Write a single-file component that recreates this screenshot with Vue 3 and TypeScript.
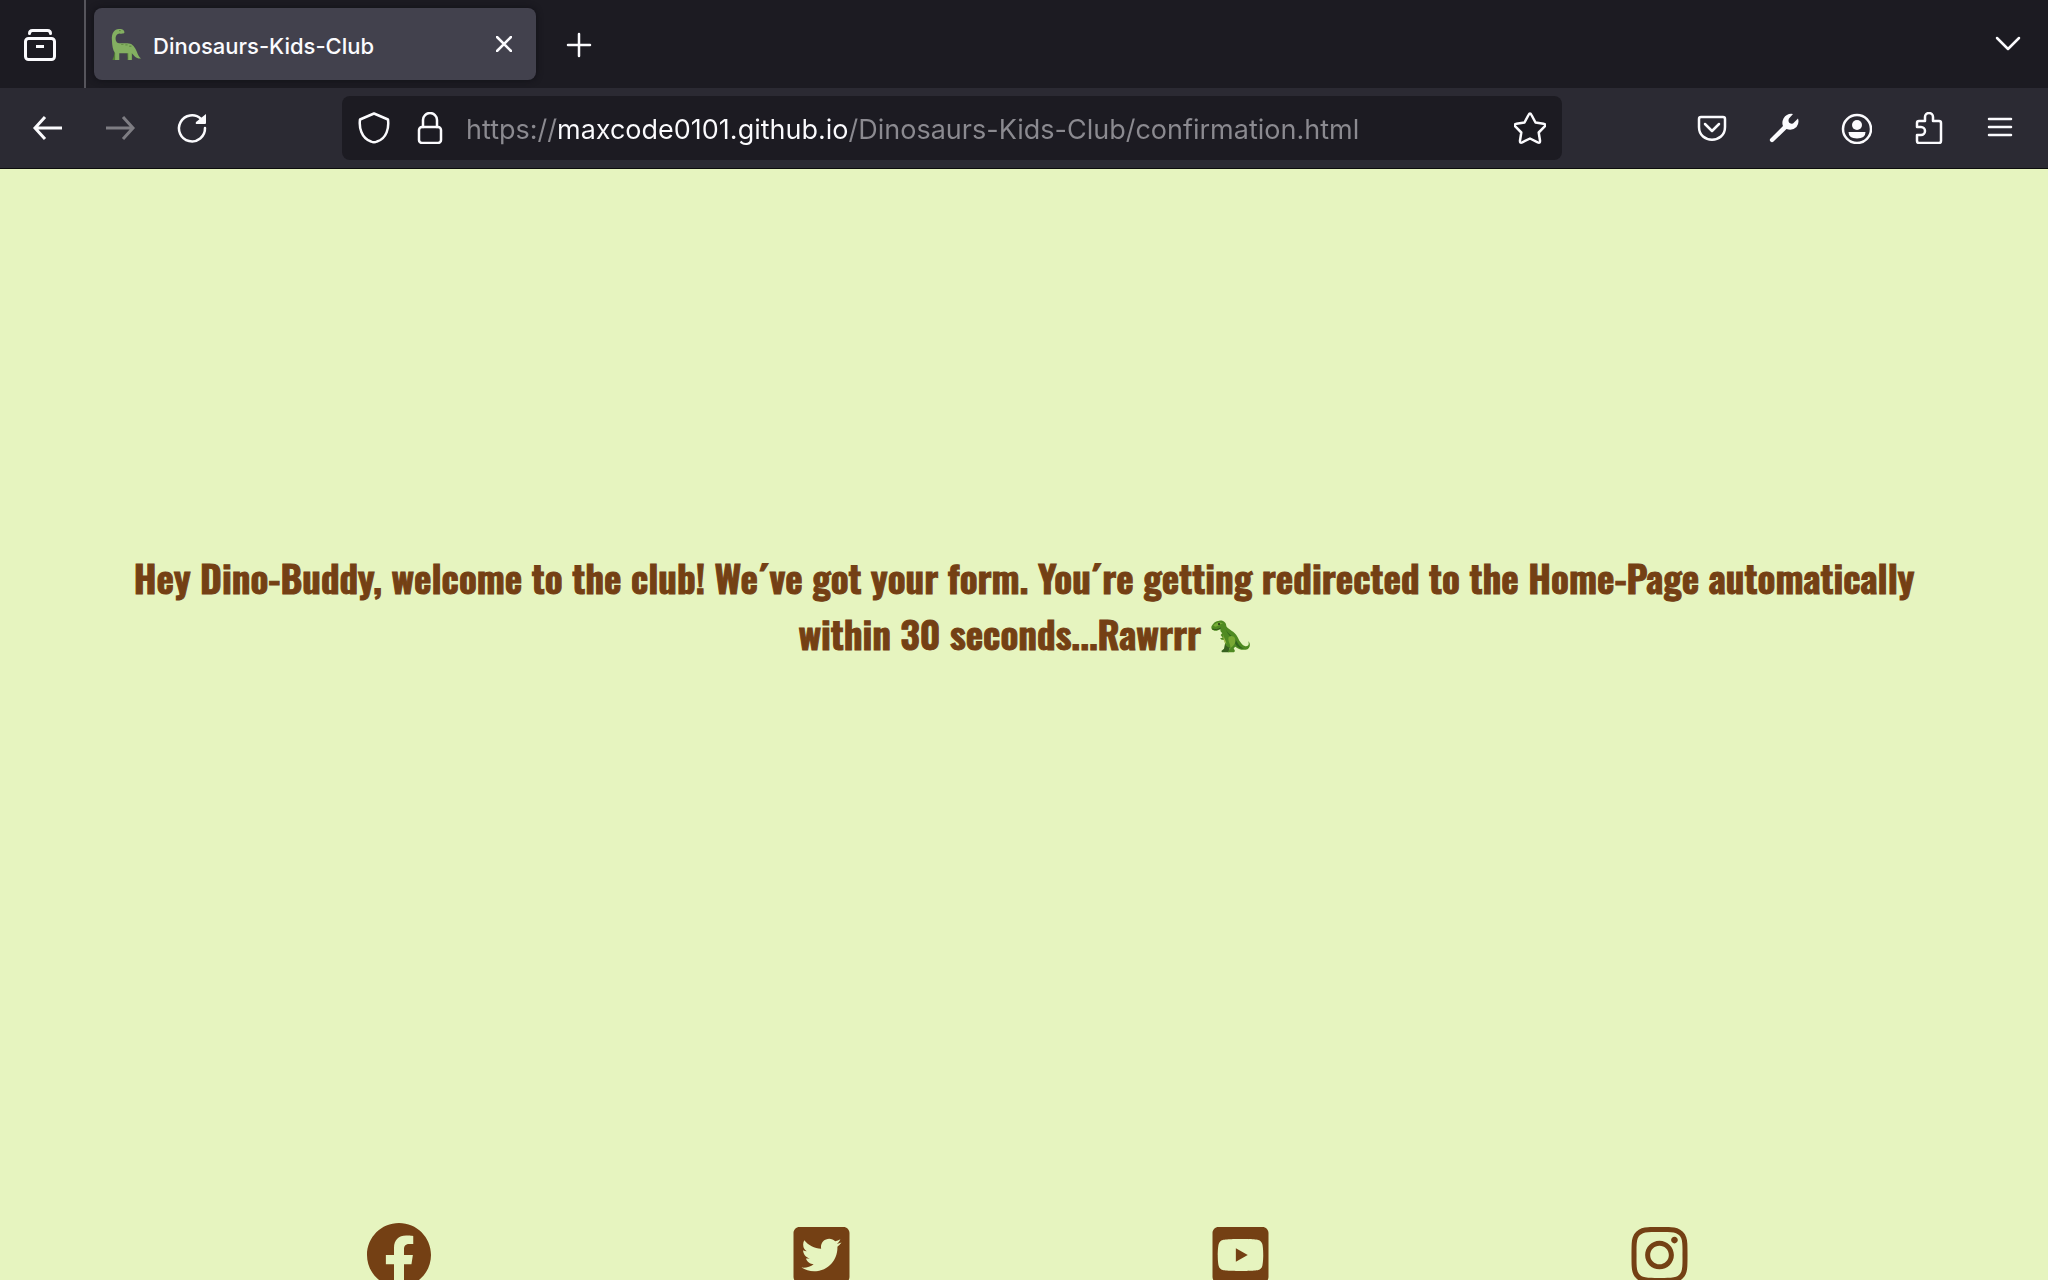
<script setup lang="ts">
import { ref } from 'vue'

interface SocialLink {
  name: string
  href: string
  width: number
  viewBox: string
  path: string
}

const address = ref('https://maxcode0101.github.io/Dinosaurs-Kids-Club/confirmation.html')

const socials: SocialLink[] = [
  {
    name: 'Facebook',
    href: 'https://www.facebook.com',
    width: 64,
    viewBox: '8 8 496 496',
    path: 'M504 256C504 119 393 8 256 8S8 119 8 256c0 123.78 90.69 226.38 209.25 245V327.69h-63V256h63v-54.64c0-62.15 37-96.48 93.67-96.48 27.14 0 55.52 4.84 55.52 4.84v61h-31.28c-30.8 0-40.41 19.12-40.41 38.73V256h68.78l-11 71.69h-57.78V501C413.31 482.38 504 379.78 504 256z',
  },
  {
    name: 'Twitter',
    href: 'https://www.twitter.com',
    width: 57,
    viewBox: '0 0 448 512',
    path: 'M400 32H48C21.5 32 0 53.5 0 80v352c0 26.5 21.5 48 48 48h352c26.5 0 48-21.5 48-48V80c0-26.5-21.5-48-48-48zm-48.9 158.8c.2 2.8.2 5.7.2 8.5 0 86.7-66 186.6-186.6 186.6-37.2 0-71.7-10.8-100.7-29.4 5.3.6 10.4.8 15.8.8 30.7 0 58.9-10.4 81.4-28-28.8-.6-53-19.5-61.3-45.5 10.1 1.5 19.2 1.5 29.6-1.2-30-6.1-52.5-32.5-52.5-64.4v-.8c8.7 4.9 18.9 7.9 29.6 8.3a65.447 65.447 0 0 1-29.2-54.6c0-12.2 3.2-23.4 8.9-33.1 32.3 39.8 80.8 65.8 135.2 68.6-9.3-44.5 24-80.6 64-80.6 18.9 0 35.9 7.9 47.9 20.7 14.8-2.8 29-8.3 41.6-15.8-4.9 15.2-15.2 28-28.8 36.1 13.2-1.4 26-5.1 37.8-10.2-8.9 13.1-20.1 24.7-32.9 34z',
  },
  {
    name: 'YouTube',
    href: 'https://www.youtube.com',
    width: 57,
    viewBox: '0 0 448 512',
    path: 'M186.8 202.1l95.2 54.1-95.2 54.1V202.1zM448 80v352c0 26.5-21.5 48-48 48H48c-26.5 0-48-21.5-48-48V80c0-26.5 21.5-48 48-48h352c26.5 0 48 21.5 48 48zm-42 176.3s0-59.6-7.6-88.2c-4.2-15.8-16.5-28.2-32.2-32.4C337.9 128 224 128 224 128s-113.9 0-142.2 7.7c-15.7 4.2-28 16.6-32.2 32.4-7.6 28.5-7.6 88.2-7.6 88.2s0 59.6 7.6 88.2c4.2 15.8 16.5 27.7 32.2 31.9C110.1 384 224 384 224 384s113.9 0 142.2-7.7c15.7-4.2 28-16.1 32.2-31.9 7.6-28.5 7.6-88.1 7.6-88.1z',
  },
  {
    name: 'Instagram',
    href: 'https://www.instagram.com',
    width: 57,
    viewBox: '0 0 448 512',
    path: 'M224.1 141c-63.6 0-114.9 51.3-114.9 114.9s51.3 114.9 114.9 114.9S339 319.5 339 255.9 287.7 141 224.1 141zm0 189.6c-41.1 0-74.7-33.5-74.7-74.7s33.5-74.7 74.7-74.7 74.7 33.5 74.7 74.7-33.6 74.7-74.7 74.7zm146.4-194.3c0 14.9-12 26.8-26.8 26.8-14.9 0-26.8-12-26.8-26.8s12-26.8 26.8-26.8 26.8 12 26.8 26.8zm76.1 27.2c-1.7-35.9-9.9-67.7-36.2-93.9-26.2-26.2-58-34.4-93.9-36.2-37-2.1-147.9-2.1-184.9 0-35.8 1.7-67.6 9.9-93.9 36.1s-34.4 58-36.2 93.9c-2.1 37-2.1 147.9 0 184.9 1.7 35.9 9.9 67.7 36.2 93.9s58 34.4 93.9 36.2c37 2.1 147.9 2.1 184.9 0 35.9-1.7 67.7-9.9 93.9-36.2 26.2-26.2 34.4-58 36.2-93.9 2.1-37 2.1-147.8 0-184.8zM398.8 388c-7.8 19.6-22.9 34.7-42.6 42.6-29.5 11.7-99.5 9-132.1 9s-102.7 2.6-132.1-9c-19.6-7.8-34.7-22.9-42.6-42.6-11.7-29.5-9-99.5-9-132.1s-2.6-102.7 9-132.1c7.8-19.6 22.9-34.7 42.6-42.6 29.5-11.7 99.5-9 132.1-9s102.7-2.6 132.1 9c19.6 7.8 34.7 22.9 42.6 42.6 11.7 29.5 9 99.5 9 132.1s2.7 102.7-9 132.1z',
  },
]
</script>

<template>
  <div class="window">
    <header class="chrome">
      <div class="tab-strip">
        <button class="view-button" type="button" aria-label="View">
          <svg class="icon" viewBox="0 0 32 32">
            <path d="M5.500 4.500q0-3 3-3h15q3 0 3 3" />
            <rect x="1.500" y="9.500" width="29" height="21" rx="3" />
            <path d="M12 17.500h8" stroke-width="3" stroke-linecap="butt" />
          </svg>
        </button>
        <div class="tab">
          <svg class="favicon" viewBox="0 0 96 100">
            <path d="M14 62h12v38H6c0-5 3-7 4-12zM52 70h15v30H52c2-5 0-10 0-16z" fill="#527f35" />
            <path d="M4 38C2 14 13 1 29 3c8 0 15 4 14 12-3 3-10 3-16 2-12 3-13 13-10 24 2 7 8 7 15 7h20c15 0 21 9 27 20 5 10 9 24 16 27-13 3-23-9-29-17v22H55V79H27v21H14V78C6 69 5 55 4 38z" fill="#83af61" />
            <path d="M33 50h7v3h-7zM46 51h7v4h-7zM58 55h7v4h-7z" fill="#648f46" />
            <circle cx="29" cy="8" r="2" fill="#3f6429" />
          </svg>
          <span class="tab-title">Dinosaurs-Kids-Club</span>
          <button class="close-button" type="button" aria-label="Close tab">
            <svg viewBox="0 0 16 16" width="16" height="16"><path d="M1 1l14 14M15 1L1 15" /></svg>
          </button>
        </div>
        <button class="tool new-tab" type="button" aria-label="New tab">
          <svg class="icon" viewBox="0 0 32 32"><path d="M16 5v22M5 16h22" /></svg>
        </button>
        <button class="tool tab-list" type="button" aria-label="List all tabs">
          <svg class="icon" viewBox="0 0 32 32"><path d="M5 10l11 11 11-11" /></svg>
        </button>
      </div>

      <nav class="nav-bar" aria-label="Browser navigation">
        <button class="tool" type="button" aria-label="Back">
          <svg class="icon thick" viewBox="0 0 32 32"><path d="M30 16H4M13 5L3 16l10 11" stroke-linecap="butt" /></svg>
        </button>
        <button class="tool forward" type="button" aria-label="Forward" disabled>
          <svg class="icon thick" viewBox="0 0 32 32"><path d="M2 16h26M19 5l10 11-10 11" stroke-linecap="butt" /></svg>
        </button>
        <button class="tool" type="button" aria-label="Reload">
          <svg class="icon" viewBox="0 0 32 32">
            <path d="M29 16a13 13 0 1 1-4-9" />
            <path class="solid" d="M30 2v9q0 1-1 1h-8q-2 0-1-2z" />
          </svg>
        </button>

        <div class="address">
          <button class="address-button" type="button" aria-label="Tracking protection">
            <svg class="icon" viewBox="0 0 32 32"><path d="M16 1.500L30 7.500c1 8-1 19-11 22q-3 1.600-6 0C3 26 1 15 2 7.500z" /></svg>
          </button>
          <button class="address-button" type="button" aria-label="Site information">
            <svg class="icon" viewBox="0 0 32 32">
              <rect x="5" y="15" width="22" height="16" rx="3" />
              <path d="M9 15V8a7 7 0 0 1 14 0v7" />
            </svg>
          </button>
          <input v-model="address" class="address-input" type="text" aria-label="Address" spellcheck="false" />
          <button class="address-button star" type="button" aria-label="Bookmark this page">
            <svg class="icon" viewBox="0 0 32 32">
              <path d="M14.500 3q1.500-3 3 0l4 7.500 8 1.200q3 .500 1 3L24.700 20.500l1.300 8q.300 3-2.300 1.800L16 26.500l-7.700 3.800q-2.600 1.200-2.300-1.800l1.300-8-5.800-5.800q-2-2.500 1-3l8-1.200z" />
            </svg>
          </button>
        </div>

        <button class="tool" type="button" aria-label="Save to Pocket">
          <svg class="icon" viewBox="0 0 32 32">
            <path d="M5 5h22q2 0 2 2v8c0 17-26 17-26 0V7q0-2 2-2z" />
            <path d="M9 12l7 7 7-7" />
          </svg>
        </button>
        <button class="tool" type="button" aria-label="Developer tools">
          <svg class="icon" viewBox="0 0 32 32">
            <path class="solid" d="M25 2q-6-1-9.500 4.500-2 4-.500 7.500L2.500 26.500a2.100 2.100 0 0 0 3 3L18.500 17q6 2 10-2 3-4 1.500-8.500l-5 5q-3 .500-4-1-1-2 0-4z" />
          </svg>
        </button>
        <button class="tool" type="button" aria-label="Account">
          <svg class="icon" viewBox="0 0 32 32">
            <circle cx="17" cy="17" r="14" />
            <circle class="solid" cx="17" cy="13" r="5" />
            <path class="solid" d="M8.500 20h17q0 6.500-8.500 6.500T8.500 20z" />
          </svg>
        </button>
        <button class="tool" type="button" aria-label="Extensions">
          <svg class="icon" viewBox="0 0 32 32">
            <path d="M13 9V5a4 4 0 0 1 8 0v4h6q2 0 2 2v18q0 2-2 2H7q-2 0-2-2v-6h4a4 4 0 0 0 0-8H5v-4q0-2 2-2z" />
          </svg>
        </button>
        <button class="tool" type="button" aria-label="Open application menu">
          <svg class="icon" viewBox="0 0 32 32"><path d="M5 7h22M5 15h22M5 23h22" /></svg>
        </button>
      </nav>
    </header>

    <main class="page">
      <h1 class="message">
        Hey Dino-Buddy, welcome to the club! We´ve got your form. You´re getting redirected to the Home-Page automatically<br />
        within 30 seconds...Rawrrr
        <svg class="rex" viewBox="0 0 117 99" role="img" aria-label="T-Rex">
          <path d="M43 66l-4 20-8 7 2 4h20l6-22z" fill="#37611f" />
          <path d="M2 18C7 8 14 3 25 2c13-2 21 7 21 17 6 10 24 14 34 33 6 13 14 25 23 27 9 1 12-5 9-15 8 7 6 23-8 25-13 2-23-3-31-9l-5 5 4 8-3 4H51l3-8 4-5c-13-3-19-11-16-24l-10-1-5-4 8-2-6-8 5-6c-5-2-6-6-6-11-8 4-14 7-22 2-5-2-6-8-4-12z" fill="#4f8a22" />
          <path d="M44 26c6 17 26 24 33 38 6 12 12 19 22 22-14 1-24-9-29-20-7-13-20-21-26-40z" fill="#32651c" />
          <path d="M39 41c-3 14 6 17 7 31-7-5-11-16-7-31z" fill="#a4bd4d" />
          <path d="M7 16c8-9 20-12 29-5-10-1-14 8-24 9z" fill="#78ad37" />
          <path d="M4 27c9 3 18 2 25-3" fill="none" stroke="#31551b" stroke-width="3" />
          <circle cx="24" cy="12" r="3" fill="#202d15" />
          <path d="M53 51c12-9 23 2 20 15-2 8-9 15-15 18 2-12-9-19-5-33z" fill="#79a833" />
        </svg>
      </h1>
    </main>

    <footer class="socials">
      <a v-for="link in socials" :key="link.name" class="social" :href="link.href" :aria-label="link.name">
        <svg :viewBox="link.viewBox" :width="link.width" height="64"><path :d="link.path" /></svg>
      </a>
    </footer>
  </div>
</template>

<style>
body {
  margin: 0;
  background: #e6f4bf;
}
</style>

<style scoped>
.window {
  display: flex;
  flex-direction: column;
  height: 100vh;
  overflow: hidden;
  background: #e6f4bf;
  font-family: Inter, "Liberation Sans", sans-serif;
}

button {
  display: flex;
  align-items: center;
  justify-content: center;
  flex: none;
  margin: 0;
  padding: 0;
  border: 0;
  background: none;
  color: #fbfbfe;
}

svg {
  display: block;
  flex: none;
}

button svg {
  fill: none;
  stroke: currentColor;
  stroke-width: 2.5;
  stroke-linecap: round;
  stroke-linejoin: round;
}

.icon {
  width: 32px;
  height: 32px;
}

.thick {
  stroke-width: 3;
  stroke-linejoin: miter;
}

.solid {
  fill: currentColor;
  stroke: none;
}

.chrome {
  flex: none;
  border-bottom: 1px solid #0c0c0d;
  background: #2b2a33;
  color: #fbfbfe;
}

.tab-strip {
  display: flex;
  align-items: center;
  height: 88px;
  padding-right: 12px;
  background: #1c1b22;
}

.view-button {
  width: 86px;
  height: 88px;
  padding: 2px 4px 0 0;
  border-right: 2px solid #56555c;
}

.view-button svg {
  stroke-width: 3;
}

.tab {
  display: flex;
  align-items: center;
  box-sizing: border-box;
  width: 442px;
  height: 72px;
  margin-left: 8px;
  padding: 0 16px;
  border-radius: 8px;
  background: #42414d;
  box-shadow: 0 0 6px #111016;
}

.favicon {
  width: 32px;
  height: 32px;
}

.tab-title {
  flex: 1;
  margin-left: 11px;
  padding-top: 3px;
  font-size: 22px;
  font-weight: 450;
  line-height: 32px;
  white-space: nowrap;
}

.close-button {
  width: 32px;
  height: 32px;
}

.tool {
  width: 72px;
  height: 56px;
}

.new-tab {
  margin-left: 7px;
  padding-top: 2px;
}

.tab-list {
  width: 56px;
  margin-left: auto;
}

.nav-bar {
  display: flex;
  align-items: center;
  height: 80px;
  padding: 0 12px;
}

.forward {
  color: #7e7d83;
}

.address {
  display: flex;
  align-items: center;
  flex: 1;
  min-width: 0;
  height: 64px;
  margin: 0 114px;
  border-radius: 8px;
  background: #1c1b22;
}

.address-button {
  width: 56px;
  height: 56px;
}

.address-button:first-child {
  margin-left: 4px;
}

.address-input {
  flex: 1;
  min-width: 0;
  height: 40px;
  margin-left: 8px;
  padding: 2px 0 0;
  border: 0;
  outline: 0;
  background: linear-gradient(90deg, #8b8a90 90px, #fbfbfe 90px 382px, #8b8a90 382px);
  background-clip: text;
  color: transparent;
  font-family: inherit;
  font-size: 27px;
}

.star {
  width: 64px;
}

.page {
  flex: 1;
  padding: 380px 48px 0;
}

.message {
  margin: 0;
  color: #744014;
  font-family: "Oswald", "Liberation Sans Narrow", "Open Sans Condensed", "DejaVu Sans Condensed", sans-serif;
  font-size: 38px;
  font-weight: 640;
  line-height: 56px;
  text-align: center;
  white-space: nowrap;
  -webkit-text-stroke: 1px currentColor;
}

.rex {
  display: inline-block;
  width: 39px;
  height: 33px;
  vertical-align: -3px;
}

.socials {
  display: flex;
  justify-content: space-between;
  flex: none;
  height: 57px;
  padding: 0 17.6% 0 17.9%;
}

.social {
  color: #744014;
}

.social svg {
  fill: currentColor;
}
</style>
